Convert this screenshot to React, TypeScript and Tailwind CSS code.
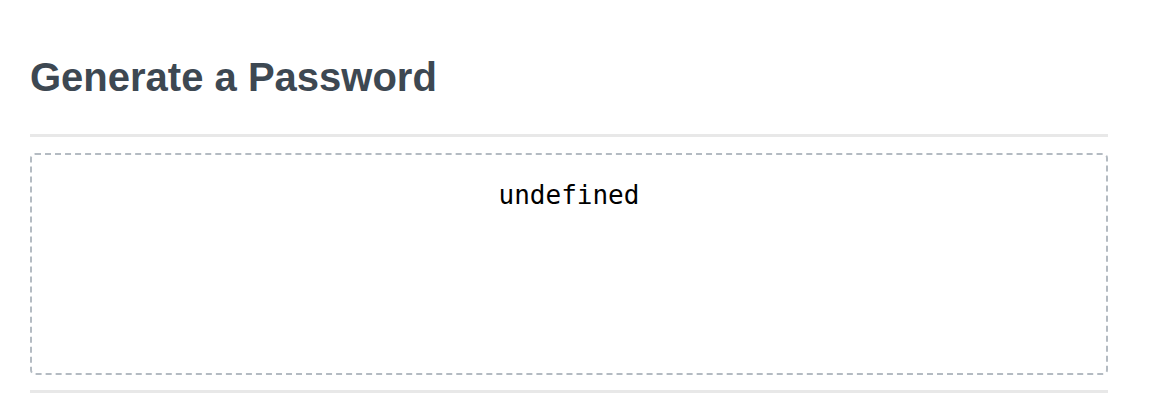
export default function App() {
  return (
    <div className="w-[1168px] h-[400px] bg-white px-[30px] pt-[50px] font-['Liberation_Sans',Arial,sans-serif]">
      <div className="w-[1078px]">
        <h1 className="text-[40px] leading-[54px] font-bold text-[#3d4852]">
          Generate a Password
        </h1>
        <hr className="mt-[30px] border-0 h-[3px] bg-[#e8e8e8]" />
        <div className="mt-[16px] h-[222px] rounded-[5px] border-2 border-dashed border-[#b4bbc2] pt-[24px] text-center">
          <span className="font-['DejaVu_Sans_Mono',monospace] text-[26px] leading-[32px] text-black">
            undefined
          </span>
        </div>
        <hr className="mt-[15px] border-0 h-[3px] bg-[#e8e8e8]" />
      </div>
    </div>
  );
}
